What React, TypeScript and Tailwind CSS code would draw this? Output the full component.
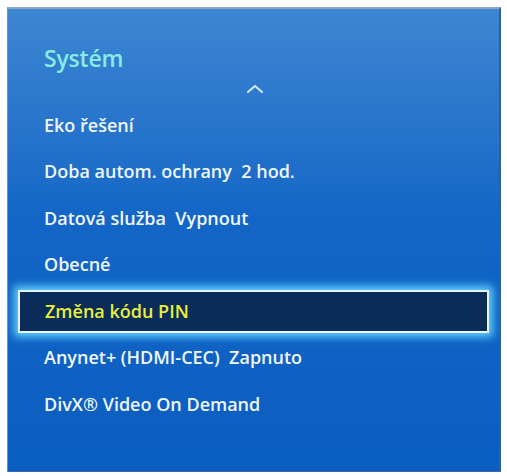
import React from "react";

const items: { label: string; selected?: boolean }[] = [
  { label: "Eko řešení" },
  { label: "Doba autom. ochrany\u00a0 2 hod." },
  { label: "Datová služba\u00a0 Vypnout" },
  { label: "Obecné" },
  { label: "Změna kódu PIN", selected: true },
  { label: "Anynet+ (HDMI-CEC)\u00a0 Zapnuto" },
  { label: "DivX® Video On Demand" },
];

export default function App() {
  return (
    <div className="w-[507px] h-[476px] bg-white pt-[7px] pl-[7px]" style={{ fontFamily: '"Open Sans", "Noto Sans", sans-serif' }}>
      <div className="w-[494px] h-[465px] border-t-2 border-t-[#8aa4c4] border-l border-l-[#6f93c0] border-r-2 border-r-[#2d5f9a] border-b border-b-[#3a6aa5] bg-gradient-to-b from-[#3d86d2] via-[#1366c6] via-[45%] to-[#0b5ec1] flex flex-col">
        <div className="pl-[36px] pt-[35px] text-[23px] leading-[29px] font-semibold text-[#86ece2] tracking-[-0.2px]">
          Systém
        </div>
        <div className="flex justify-center pt-[11px] h-[30px]">
          <svg width="18" height="9" viewBox="0 0 18 9" className="ml-[2px]">
            <path d="M2 8 L9 2 L16 8" stroke="#cfe6ff" strokeWidth="2.2" fill="none" strokeLinecap="round" strokeLinejoin="round" />
          </svg>
        </div>
        <div className="flex flex-col -mt-[1px]">
          {items.map((it) =>
            it.selected ? (
              <div key={it.label} className="h-[46.5px] flex items-center px-[10px]">
                <div className="w-full h-[43px] flex items-center pl-[25px] bg-[#0b2b58] border-2 border-[#eaf6ff] shadow-[0_0_8px_4px_#5fd0ff] text-[18px] font-semibold text-[#e9ee3c] tracking-[0px]">
                  {it.label}
                </div>
              </div>
            ) : (
              <div key={it.label} className="h-[46.5px] flex items-center pl-[36px] text-[18px] font-semibold text-[#eef7ff] tracking-[0px]">
                {it.label}
              </div>
            )
          )}
        </div>
      </div>
    </div>
  );
}
